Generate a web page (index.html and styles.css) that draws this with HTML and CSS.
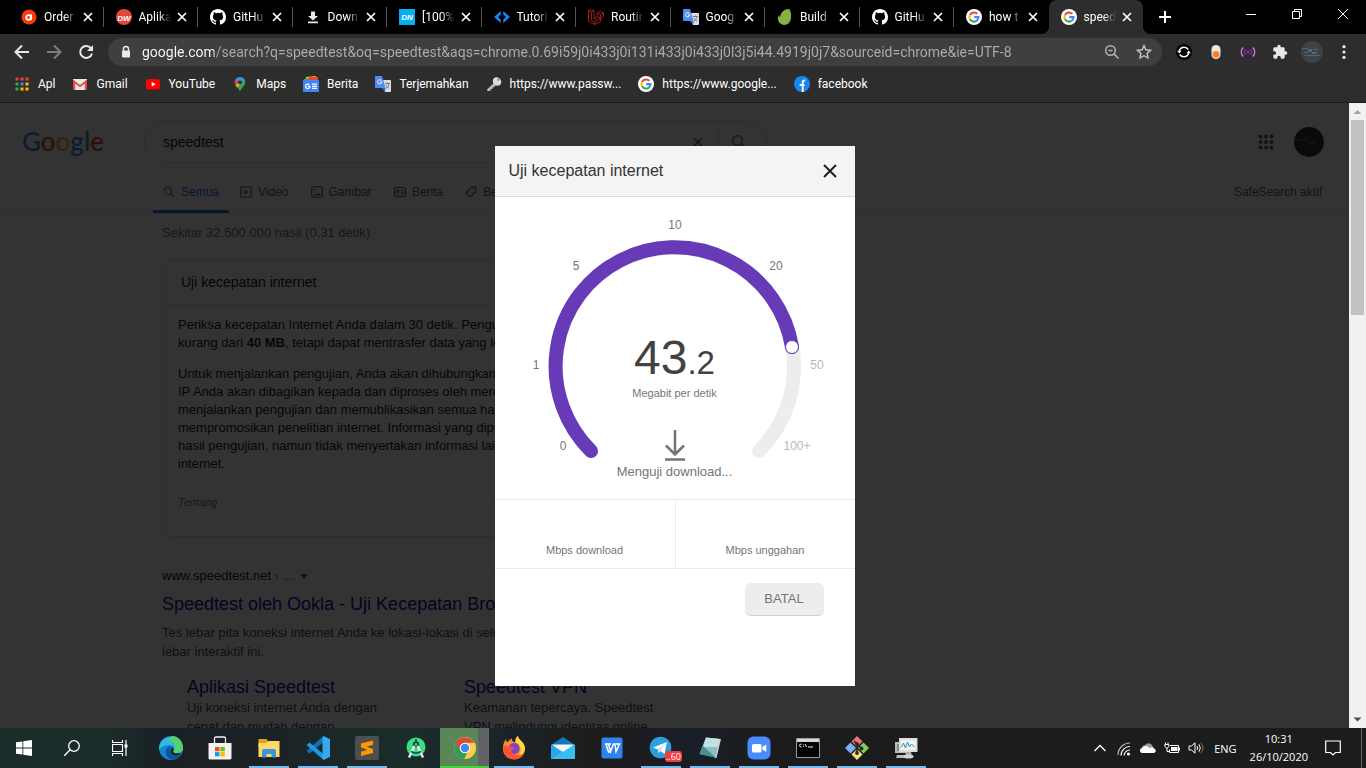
FILE: index.html
```html
<!DOCTYPE html>
<html lang="id">
<head>
<meta charset="utf-8">
<title>speedtest - Penelusuran Google</title>
<link rel="stylesheet" href="styles.css">
</head>
<body>
<svg class="sprite" aria-hidden="true">
  <symbol id="i-x" viewBox="0 0 16 16"><path d="M4 4l8 8M12 4l-8 8" fill="none" stroke="currentColor" stroke-width="1.7"/></symbol>
  <symbol id="i-google" viewBox="0 0 16 16"><circle cx="8" cy="8" r="8" fill="#fff"/><g fill="none" stroke-width="2.1"><path d="M11.3 4.9A4.5 4.5 0 0 0 4 5.9" stroke="#ea4335"/><path d="M4 5.9a4.5 4.5 0 0 0 0 4.2" stroke="#fbbc05"/><path d="M4 10.1a4.5 4.5 0 0 0 7 1.4" stroke="#34a853"/><path d="M11 11.5a4.5 4.5 0 0 0 1.5-3.4H8.2" stroke="#4285f4"/></g></symbol>
  <symbol id="i-github" viewBox="0 0 16 16"><path fill="#fff" d="M8 0C3.58 0 0 3.58 0 8c0 3.54 2.29 6.53 5.47 7.59.4.07.55-.17.55-.38 0-.19-.01-.82-.01-1.49-2.01.37-2.53-.49-2.69-.94-.09-.23-.48-.94-.82-1.13-.28-.15-.68-.52-.01-.53.63-.01 1.08.58 1.23.82.72 1.21 1.87.87 2.33.66.07-.52.28-.87.51-1.07-1.78-.2-3.64-.89-3.64-3.95 0-.87.31-1.59.82-2.15-.08-.2-.36-1.02.08-2.12 0 0 .67-.21 2.2.82a7.4 7.4 0 0 1 4 0c1.53-1.04 2.2-.82 2.2-.82.44 1.1.16 1.92.08 2.12.51.56.82 1.27.82 2.15 0 3.07-1.87 3.75-3.65 3.95.29.25.54.73.54 1.48 0 1.07-.01 1.93-.01 2.2 0 .21.15.46.55.38A8.01 8.01 0 0 0 16 8c0-4.42-3.58-8-8-8z"/></symbol>
  <symbol id="i-translate" viewBox="0 0 16 16"><path d="M7 4h8a1 1 0 0 1 1 1v10a1 1 0 0 1-1 1h-5z" fill="#dadce0"/><path d="M1 0h6l3.5 12H1a1 1 0 0 1-1-1V1a1 1 0 0 1 1-1z" fill="#4f8df5"/><path d="M7 12h3.5L10 16z" fill="#3367d6"/><path d="M6.4 4.6A2.1 2.1 0 1 0 6.8 6H5" fill="none" stroke="#fff" stroke-width="1"/><path d="M10 7.5h5M12.5 6.5v1M14 8c-.5 2-1.7 3.300-3 4.200M11 9c.8 1.500 2 2.500 3.200 3.200" fill="none" stroke="#5f7080" stroke-width=".9"/></symbol>
  <symbol id="i-search" viewBox="0 0 16 16"><circle cx="6.500" cy="6.500" r="4.700" fill="none" stroke="currentColor" stroke-width="1.600"/><path d="M10 10l5 5" stroke="currentColor" stroke-width="1.800"/></symbol>
</svg>

<header class="browser">
  <div class="tabstrip">
    <nav class="tabs" aria-label="Tab">
      <div class="tab"><svg class="fav" viewBox="0 0 16 16"><circle cx="8" cy="8" r="7.500" fill="#fb3a0c"/><circle cx="7.500" cy="8.500" r="2.300" fill="none" stroke="#fff" stroke-width="1.700"/><path d="M10.200 5.500v5.700" stroke="#fff" stroke-width="1.700"/></svg><span class="tab-title">Order</span><button class="tab-x" aria-label="Tutup"><svg><use href="#i-x"/></svg></button></div>
      <div class="tab"><svg class="fav" viewBox="0 0 16 16"><circle cx="8" cy="8" r="8" fill="#e1463d"/><text x="8" y="11.500" class="mark">DW</text></svg><span class="tab-title">Aplika</span><button class="tab-x" aria-label="Tutup"><svg><use href="#i-x"/></svg></button></div>
      <div class="tab"><svg class="fav"><use href="#i-github"/></svg><span class="tab-title">GitHu</span><button class="tab-x" aria-label="Tutup"><svg><use href="#i-x"/></svg></button></div>
      <div class="tab"><svg class="fav" viewBox="0 0 16 16"><path d="M6 2.500h4V7h3l-5 4.500L3 7h3zM3 12.500h10v1.700H3z" fill="#e8e8e8"/></svg><span class="tab-title">Down</span><button class="tab-x" aria-label="Tutup"><svg><use href="#i-x"/></svg></button></div>
      <div class="tab"><svg class="fav" viewBox="0 0 16 16"><path d="M0 0h16v16H0z" fill="#05aeef"/><text x="8" y="11" class="mark">DN</text></svg><span class="tab-title">[100%</span><button class="tab-x" aria-label="Tutup"><svg><use href="#i-x"/></svg></button></div>
      <div class="tab"><svg class="fav" viewBox="0 0 16 16"><path d="M6.700 2L0 8l6.700 6v-3.600L4.200 8l2.500-2.400zM9.300 2L16 8l-6.700 6v-3.600L11.800 8 9.300 5.600z" fill="#1583f5"/></svg><span class="tab-title">Tutori</span><button class="tab-x" aria-label="Tutup"><svg><use href="#i-x"/></svg></button></div>
      <div class="tab"><svg class="fav" viewBox="0 0 16 16"><path d="M.5 1.500l3-1 2.500 1v8l3.200-1.800V4l3-1.800L15.500 4v3.600l-3 1.800v3L6.500 15.500l-6-3.400zM.5 1.500l3 1.500v8.500l3 1.800 6-3.800M3.500 3L6 1.500M9.200 4l3.100 1.700L15.500 4M12.300 5.700v3.600M6 9.500l3.200 1.700M9.200 7.700l3.200 1.700M6.500 13v2.500" fill="none" stroke="#b3211b" stroke-width=".9"/></svg><span class="tab-title">Routin</span><button class="tab-x" aria-label="Tutup"><svg><use href="#i-x"/></svg></button></div>
      <div class="tab"><svg class="fav"><use href="#i-translate"/></svg><span class="tab-title">Goog</span><button class="tab-x" aria-label="Tutup"><svg><use href="#i-x"/></svg></button></div>
      <div class="tab"><svg class="fav" viewBox="0 0 16 16"><path d="M12.300.2c-.7-.5-4 0-6.500 2.200C3 5 3.200 8.300 3.200 8.300s-1-.6-1.100-2.300c-1.500 2-1.800 4.800.2 7.500 2.200 3 6.800 3.100 9.200 1 4-3.600 2.700-13 .8-14.300z" fill="#81b441"/></svg><span class="tab-title">Build</span><button class="tab-x" aria-label="Tutup"><svg><use href="#i-x"/></svg></button></div>
      <div class="tab"><svg class="fav"><use href="#i-github"/></svg><span class="tab-title">GitHu</span><button class="tab-x" aria-label="Tutup"><svg><use href="#i-x"/></svg></button></div>
      <div class="tab tab-last"><svg class="fav"><use href="#i-google"/></svg><span class="tab-title">how t</span><button class="tab-x" aria-label="Tutup"><svg><use href="#i-x"/></svg></button></div>
      <div class="tab tab-active"><svg class="fav"><use href="#i-google"/></svg><span class="tab-title">speed</span><button class="tab-x" aria-label="Tutup"><svg><use href="#i-x"/></svg></button></div>
    </nav>
    <button class="new-tab" aria-label="Tab baru"><svg viewBox="0 0 16 16"><path d="M8 2v12M2 8h12" stroke="#fff" stroke-width="2"/></svg></button>
    <div class="win-controls">
      <button aria-label="Minimalkan"><svg viewBox="0 0 12 12"><path d="M1 6.500h10" stroke="#fff"/></svg></button>
      <button aria-label="Pulihkan"><svg viewBox="0 0 12 12"><path d="M1.500 3.500h7v7h-7zM3.500 3.500v-2h7v7h-2" fill="none" stroke="#fff"/></svg></button>
      <button aria-label="Tutup"><svg viewBox="0 0 12 12"><path d="M1 1l10 10M11 1L1 11" stroke="#fff"/></svg></button>
    </div>
  </div>

  <div class="toolbar">
    <button class="tool" aria-label="Kembali"><svg viewBox="0 0 16 16"><path d="M15 8H2M8 1.500L1.500 8 8 14.500" fill="none" stroke="#e8e8e8" stroke-width="2"/></svg></button>
    <button class="tool" aria-label="Maju"><svg viewBox="0 0 16 16"><path d="M1 8h13M8 1.500L14.500 8 8 14.500" fill="none" stroke="#7d7d7d" stroke-width="2"/></svg></button>
    <button class="tool" aria-label="Muat ulang"><svg viewBox="0 0 16 16"><path d="M13 4.300A6 6 0 1 0 14 9.500" fill="none" stroke="#e8e8e8" stroke-width="2"/><path d="M15 1v6H9z" fill="#e8e8e8"/></svg></button>
    <div class="omnibox">
      <svg class="lock" viewBox="0 0 10 14"><path d="M2.500 6V4a2.500 2.500 0 0 1 5 0v2" fill="none" stroke="#e8e8e8" stroke-width="1.500"/><rect x="1" y="5.500" width="8" height="7" rx="1" fill="#e8e8e8"/></svg>
      <input class="url" type="text" aria-label="Alamat" value="google.com/search?q=speedtest&amp;oq=speedtest&amp;aqs=chrome.0.69i59j0i433j0i131i433j0i433j0l3j5i44.4919j0j7&amp;sourceid=chrome&amp;ie=UTF-8">
      <button class="tool" aria-label="Zoom"><svg viewBox="0 0 16 16"><circle cx="6.500" cy="6.500" r="4.800" fill="none" stroke="#b4b4b4" stroke-width="1.500"/><path d="M10 10l4.500 4.500M4.500 6.500h4" stroke="#b4b4b4" stroke-width="1.600"/></svg></button>
      <button class="tool" aria-label="Bookmark"><svg viewBox="0 0 16 16"><path d="M8 1.600l1.900 4.200 4.600.5-3.400 3.100.9 4.600L8 11.700 4 14l.9-4.600L1.500 6.300l4.600-.5z" fill="none" stroke="#c4c4c4" stroke-width="1.400"/></svg></button>
    </div>
    <button class="tool" aria-label="Sinkronisasi"><svg viewBox="0 0 16 16"><circle cx="8" cy="8" r="8" fill="#000"/><path d="M3.300 6.800a5 5 0 0 1 9-1.300M12.700 9.200a5 5 0 0 1-9 1.300" fill="none" stroke="#fff" stroke-width="1.400"/><path d="M1 6.800h4.600L3.300 9.600zM10.400 9.200H15l-2.300-2.800z" fill="#fff"/></svg></button>
    <button class="tool" aria-label="Ekstensi tombol"><svg viewBox="0 0 16 16"><rect x="3.500" y="1" width="9" height="14" rx="4.500" fill="#e9e9e9"/><circle cx="8" cy="10.300" r="3.400" fill="#f5812a"/></svg></button>
    <button class="tool" aria-label="Ekstensi sinyal"><svg viewBox="0 0 16 16"><circle cx="8" cy="8" r="1.300" fill="#b01fd0"/><path d="M5.600 5.300a4 4 0 0 0 0 5.400M10.400 5.300a4 4 0 0 1 0 5.400" fill="none" stroke="#a516c8" stroke-width="1.200"/><path d="M3 3.500a7 7 0 0 0 0 9M13 3.500a7 7 0 0 1 0 9" fill="none" stroke="#cb8ade" stroke-width="1.400"/></svg></button>
    <button class="tool" aria-label="Ekstensi"><svg viewBox="0 0 24 24"><path d="M20.500 11H19V7a2 2 0 0 0-2-2h-4V3.500a2.500 2.500 0 0 0-5 0V5H4a2 2 0 0 0-2 2v3.800h1.500a2.700 2.700 0 0 1 0 5.400H2V20a2 2 0 0 0 2 2h3.800v-1.500a2.700 2.700 0 0 1 5.400 0V22H17a2 2 0 0 0 2-2v-4h1.500a2.500 2.500 0 0 0 0-5z" fill="#e8e8e8"/></svg></button>
    <button class="tool tool-avatar" aria-label="Profil"><svg viewBox="0 0 22 22"><circle cx="11" cy="11" r="11" fill="#3d4247"/><path d="M1 7h6v1H1zM3 11h4v1H3zM3 14h16v1H3zM12 8h5v1h-5z" fill="#59626b"/><path d="M7 8h4v3H7zM11 11h5v2h-5z" fill="#4f6780"/></svg></button>
    <button class="tool" aria-label="Menu"><svg viewBox="0 0 16 16" fill="#e8e8e8"><circle cx="8" cy="2.700" r="1.600"/><circle cx="8" cy="8" r="1.600"/><circle cx="8" cy="13.300" r="1.600"/></svg></button>
  </div>

  <nav class="bookmarks" aria-label="Bookmark">
    <a href="#apps"><svg viewBox="0 0 16 16"><path d="M1.500 1.500h3v3h-3zM6.500 1.500h3v3h-3zM11.500 1.500h3v3h-3z" fill="#ea4335"/><path d="M1.500 6.500h3v3h-3zM1.500 11.500h3v3h-3z" fill="#34a853"/><path d="M6.500 6.500h3v3h-3z" fill="#4285f4"/><path d="M11.500 6.500h3v3h-3zM6.500 11.500h3v3h-3zM11.500 11.500h3v3h-3z" fill="#fbbc05"/></svg>Apl</a>
    <a href="#gmail"><svg viewBox="0 0 16 16"><path d="M1 3h14v11H1z" fill="#e8e8e8"/><path d="M1 14V3.500L8 9l7-5.500V14h-2.200V7.500L8 11.300 3.200 7.500V14z" fill="#e04a3f"/></svg>Gmail</a>
    <a href="#youtube"><svg viewBox="0 0 16 16"><rect x="1" y="3" width="14" height="10.500" rx="2.500" fill="#f00"/><path d="M6.700 5.900l4 2.300-4 2.300z" fill="#fff"/></svg>YouTube</a>
    <a href="#maps"><svg viewBox="0 0 16 16"><path d="M8 1a5.300 5.300 0 0 0-5.300 5.300C2.700 10 7 12 8 15.500 9 12 13.300 10 13.300 6.300A5.300 5.300 0 0 0 8 1z" fill="#34a853"/><path d="M8 1a5.300 5.300 0 0 1 4.700 2.800L8 7 3.500 4C4.300 2.200 6 1 8 1z" fill="#4285f4"/><path d="M3.700 3.300L7 6.500 4 10.200C2.200 7.500 2.200 5.500 3.700 3.300z" fill="#ea4335"/><path d="M9.500 6L5 11.500 3.800 10 8 5z" fill="#fbbc05"/><circle cx="8" cy="6.300" r="1.900" fill="#2e2e2e"/></svg>Maps</a>
    <a href="#berita"><svg viewBox="0 0 16 16"><path d="M3 1l10-1v5H3z" fill="#fbbc05"/><path d="M1 3l10-2 1 4H1z" fill="#34a853"/><path d="M6 1h9v4H6z" fill="#ea4335"/><rect y="4" width="16" height="12" rx="1" fill="#4285f4"/><path d="M6.300 8.700a2.200 2.200 0 1 0 .7 1.700H5M9 8.200h5M9 10.300h5M9 12.400h5" fill="none" stroke="#fff" stroke-width="1.200"/></svg>Berita</a>
    <a href="#terjemahkan"><svg><use href="#i-translate"/></svg>Terjemahkan</a>
    <a href="#passwords"><svg viewBox="0 0 16 16"><path d="M1 13.500L8 7l2 2-2 2.300-1.500.2-.2 1.700-1.800.1-.2 1.700H1.500z" fill="#bdbdbd"/><ellipse cx="11" cy="5.500" rx="4.500" ry="4" transform="rotate(45 11 5.500)" fill="#dcdcdc"/><circle cx="12.300" cy="3.800" r="1" fill="#777"/></svg>https://www.passw...</a>
    <a href="#google"><svg><use href="#i-google"/></svg>https://www.google...</a>
    <a href="#facebook"><svg viewBox="0 0 16 16"><circle cx="8" cy="8" r="8" fill="#1488f0"/><path d="M8.700 16V6.200q0-2 2.400-1.700M5.600 9h5" fill="none" stroke="#fff" stroke-width="2"/></svg>facebook</a>
  </nav>
</header>

<div class="viewport">
  <div class="page">
    <main class="content">
      <div class="page-head">
        <div class="search-row">
          <a class="logo" href="#home" aria-label="Google"><span class="c-blue">G</span><span class="c-red">o</span><span class="c-yellow">o</span><span class="c-blue">g</span><span class="c-green">l</span><span class="c-red">e</span></a>
          <form class="searchbox">
            <input type="text" aria-label="Telusuri" value="speedtest">
            <button type="button" class="clear" aria-label="Hapus"><svg><use href="#i-x"/></svg></button>
            <button type="button" class="go" aria-label="Cari"><svg><use href="#i-search"/></svg></button>
          </form>
          <div class="account">
            <button aria-label="Aplikasi Google"><svg class="grid-icon" viewBox="0 0 16 16" fill="#5f6368"><circle cx="2.500" cy="2.500" r="1.900"/><circle cx="8" cy="2.500" r="1.900"/><circle cx="13.500" cy="2.500" r="1.900"/><circle cx="2.500" cy="8" r="1.900"/><circle cx="8" cy="8" r="1.900"/><circle cx="13.500" cy="8" r="1.900"/><circle cx="2.500" cy="13.500" r="1.900"/><circle cx="8" cy="13.500" r="1.900"/><circle cx="13.500" cy="13.500" r="1.900"/></svg></button>
            <button aria-label="Akun"><svg class="avatar" viewBox="0 0 30 30"><circle cx="15" cy="15" r="15" fill="#2e3236"/><path d="M1 12h8v2H1zM9 10h5v4H9zM14 14h7v4h-7zM12 21h16v1H12z" fill="#40506b"/></svg></button>
          </div>
        </div>
        <nav class="filters">
          <a class="filter filter-on" href="#semua"><svg viewBox="0 0 16 16" fill="none" stroke-width="1.700"><path d="M1.500 6.500a5 5 0 0 1 5-5" stroke="#ea4335"/><path d="M6.500 1.500a5 5 0 0 1 5 5" stroke="#34a853"/><path d="M1.500 6.500a5 5 0 0 0 5 5" stroke="#fbbc05"/><path d="M11.500 6.500a5 5 0 0 1-5 5M10 10l5 5" stroke="#4285f4"/></svg>Semua</a>
          <a class="filter" href="#video"><svg viewBox="0 0 16 16"><rect x="1" y="1" width="14" height="14" rx="2" fill="none" stroke="currentColor" stroke-width="1.600"/><path d="M6.200 4.500v7l5-3.500z" fill="currentColor"/></svg>Video</a>
          <a class="filter" href="#gambar"><svg viewBox="0 0 16 16"><rect x="1" y="1" width="14" height="14" rx="2" fill="none" stroke="currentColor" stroke-width="1.600"/><path d="M3.500 12.500l2.500-3 2 1.800 2.500-2.300 2.500 3.500z" fill="currentColor"/><circle cx="5" cy="5" r="1.300" fill="currentColor"/></svg>Gambar</a>
          <a class="filter" href="#berita-filter"><svg viewBox="0 0 16 16"><rect x=".8" y="2" width="14.400" height="12" rx="1.500" fill="none" stroke="currentColor" stroke-width="1.600"/><path d="M3.500 5h3.500v4H3.500zM3.500 10.500H7v1H3.500zM9 5h4v1.200H9zM9 7.700h4v1.200H9zM9 10.400h4v1.200H9z" fill="currentColor"/></svg>Berita</a>
          <a class="filter" href="#belanja"><svg viewBox="0 0 16 16"><path d="M9 1.500h5.500V7L7 14.500 1.500 9z" fill="none" stroke="currentColor" stroke-width="1.600" stroke-linejoin="round"/><circle cx="11.500" cy="4.500" r="1.100" fill="currentColor"/></svg>Belanja</a>
          <span class="safesearch">SafeSearch aktif</span>
        </nav>
      </div>

      <div class="results">
        <p class="stats">Sekitar 32.500.000 hasil (0,31 detik)</p>
        <section class="card">
          <h2>Uji kecepatan internet</h2>
          <div class="card-body">
            <p>Periksa kecepatan Internet Anda dalam 30 detik. Pengujian biasanya<br>kurang dari <b>40 MB</b>, tetapi dapat mentrasfer data yang lebih banyak.</p>
            <p>Untuk menjalankan pengujian, Anda akan dihubungkan ke M-Lab dan<br>IP Anda akan dibagikan kepada dan diproses oleh mereka. M-Lab akan<br>menjalankan pengujian dan memublikasikan semua hasil untuk<br>mempromosikan penelitian internet. Informasi yang dipublikasikan<br>hasil pengujian, namun tidak menyertakan informasi lain tentang Anda<br>internet.</p>
            <p class="about">Tentang</p>
          </div>
        </section>
        <article class="result">
          <p class="cite">www.speedtest.net<span class="crumb"> › ...</span><span class="caret"></span></p>
          <h3><a href="#ookla">Speedtest oleh Ookla - Uji Kecepatan Broadband</a></h3>
          <p class="desc">Tes lebar pita koneksi internet Anda ke lokasi-lokasi di seluruh dunia dengan uji<br>lebar interaktif ini.</p>
          <div class="sitelinks">
            <div><h3><a href="#aplikasi">Aplikasi Speedtest</a></h3><p class="desc">Uji koneksi internet Anda dengan<br>cepat dan mudah dengan</p></div>
            <div><h3><a href="#vpn">Speedtest VPN</a></h3><p class="desc">Keamanan tepercaya. Speedtest<br>VPN melindungi identitas online</p></div>
          </div>
        </article>
      </div>
    </main>

    <div class="scrim">
      <section class="dialog" role="dialog" aria-labelledby="dlg-title">
        <header class="dialog-head">
          <h1 id="dlg-title">Uji kecepatan internet</h1>
          <button aria-label="Tutup"><svg viewBox="0 0 14 14"><path d="M1 1l12 12M13 1L1 13" stroke="#212121" stroke-width="2"/></svg></button>
        </header>
        <div class="gauge">
          <svg viewBox="0 0 360 302">
            <g fill="none" stroke-width="14" stroke-linecap="round">
              <path d="M96 254A119 119 0 1 1 264 254" stroke="#ededed"/>
              <path d="M96 254A119 119 0 1 1 297 150" stroke="#673ab7"/>
            </g>
            <circle cx="297" cy="150" r="6.500" fill="#fff" stroke="#673ab7"/>
            <g class="ticks">
              <text x="68" y="253">0</text><text x="41" y="172">1</text><text x="81" y="73">5</text><text x="180" y="32">10</text><text x="281" y="73">20</text>
              <text x="322" y="172" class="tick-off">50</text><text x="302" y="253" class="tick-off">100+</text>
            </g>
            <path d="M180 233v24M171 248.500l9 9 9-9M170 262.500h20" fill="none" stroke="#757575" stroke-width="2.500"/>
          </svg>
          <div class="reading">
            <p class="speed">43<span>.2</span></p>
            <p class="unit">Megabit per detik</p>
            <p class="status">Menguji download...</p>
          </div>
        </div>
        <div class="totals"><p>Mbps download</p><p>Mbps unggahan</p></div>
        <footer class="dialog-foot"><button>BATAL</button></footer>
      </section>
    </div>
  </div>

  <div class="scrollbar" aria-hidden="true">
    <svg viewBox="0 0 17 17"><path d="M4.500 11h8l-4-4z" fill="#a3a3a3"/></svg>
    <div class="track"><div class="thumb"></div></div>
    <svg viewBox="0 0 17 17"><path d="M4.500 6.500h8l-4 4z" fill="#505050"/></svg>
  </div>
</div>

<footer class="taskbar">
  <button class="sys" aria-label="Mulai"><svg viewBox="0 0 16 16"><path d="M0 2.300l6.500-.9v6.200H0zM7.300 1.300L16 0v7.600H7.300zM0 8.400h6.500v6.200L0 13.700zM7.300 8.400H16V16l-8.700-1.300z" fill="#fff"/></svg></button>
  <button class="sys" aria-label="Cari"><svg viewBox="0 0 16 16"><circle cx="10" cy="6" r="5.300" fill="none" stroke="#fff" stroke-width="1.300"/><path d="M6.200 9.800L0 16" stroke="#fff" stroke-width="1.300"/></svg></button>
  <button class="sys" aria-label="Tampilan tugas"><svg viewBox="0 0 16 16"><path d="M.5 0v2.500h10V0M.5 16v-2.500h10V16M.5 4.500h10v7H.5zM14 0v16" fill="none" stroke="#fff" stroke-width="1.200"/><path d="M12.500 4.500h3v3h-3z" fill="#fff"/></svg></button>
  <div class="apps">
    <button aria-label="Edge"><svg viewBox="0 0 24 24"><circle cx="12" cy="12" r="12" fill="#1583d0"/><path d="M1.500 7A12 12 0 0 1 24 11.500c0 4-3 6-6 6-4 0-4-2-3-3.500 1-2-.5-5-4-5-5 0-9 2-10.800 5C-.2 11 .5 9 1.500 7z" fill="#35b8dc"/><path d="M13 0c7 0 11 6 11 11.500 0 4-3 6-6 6-4 0-4-2-3-3.500 3-6-2-10-7-9z" fill="#55cf70"/><path d="M8 12c-3 4-.5 10 5 11.800 4-.2 7-2 9-5-5 2.500-10 1-11-4-.2-1.500.2-3 1-4-2-.3-3 .2-4 1.200z" fill="#0c559e"/><path d="M14.500 14.500c-1.500 2.500 2 3.800 7 2l-1 2.500c-4 1.500-8.500.5-9-4 0-2 1-3 2-3.700 1 .7 1.500 2 1 3.200z" fill="#172227"/></svg></button>
    <button aria-label="Store"><svg viewBox="0 0 24 24"><path d="M6.500 7V2.500q0-1.500 1.500-1.500h8q1.500 0 1.500 1.500V7" fill="none" stroke="#f2f2f2" stroke-width="1.300"/><path d="M.5 7h23v15q0 1.500-1.500 1.500H2Q.5 23.500.5 22z" fill="#f2f2f2"/><path d="M7 11h4.500v4.300H7z" fill="#f25022"/><path d="M12.300 11h4.500v4.300h-4.500z" fill="#7fba00"/><path d="M7 16.100h4.500v4.300H7z" fill="#00a4ef"/><path d="M12.300 16.100h4.500v4.300h-4.500z" fill="#ffb900"/></svg></button>
    <button class="open" aria-label="File Explorer"><svg viewBox="0 0 24 24"><path d="M1.500 3h8l2 2.500H22v6H1.500z" fill="#e2a21b"/><path d="M1.500 7H9l3-2h10.500v16h-21z" fill="#ffd867"/><path d="M5 21.500V15q0-2 2-2h10q2 0 2 2v6.500h-4.500V18h-5v3.500z" fill="#3c94d9"/></svg></button>
    <button class="open" aria-label="VS Code"><svg viewBox="0 0 24 24"><path d="M17.500 0v6L3.500 17.500.5 15z" fill="#0f72b8"/><path d="M17.500 24v-6L3.500 6.500.5 9z" fill="#2196e3"/><path d="M17.500 0L24 3v18l-6.500 3-1-1.500v-21z" fill="#34a9ed"/></svg></button>
    <button class="open" aria-label="Sublime Text"><svg viewBox="0 0 24 24"><rect width="24" height="24" rx="2" fill="#4e4e4e"/><path d="M18 4.500v4.300l-6.500 2 6.500 2.100v4.200L6 20v-4.300l6.500-2L6 11.600V7.400z" fill="#ff9800"/></svg></button>
    <button aria-label="Android Studio"><svg viewBox="0 0 24 24"><circle cx="12" cy="11" r="9.500" fill="#3ddc84"/><circle cx="12" cy="8.500" r="2.300" fill="none" stroke="#174f45" stroke-width="2"/><path d="M10.500 10L5 21.500M13.500 10L19 21.500" stroke="#e6eff2" stroke-width="2.400"/><path d="M7 15.500q5 3 10 0M12 3v3" fill="none" stroke="#174f45" stroke-width="1.700"/></svg></button>
    <button class="active" aria-label="Chrome"><svg viewBox="0 0 24 24"><circle cx="12" cy="12" r="11" fill="#ffce44"/><path d="M12 12L2.500 6.500A11 11 0 0 0 11 23l4.800-8.500z" fill="#2f9e58"/><path d="M2.500 6.500A11 11 0 0 1 21.500 6.800H12v5.200l-4.700 2.600z" fill="#db4a3c"/><circle cx="12" cy="12" r="5.300" fill="#fff"/><circle cx="12" cy="12" r="4.200" fill="#4285f4"/></svg></button>
    <button class="open" aria-label="Firefox"><svg viewBox="0 0 24 24"><path d="M16 0c0 4 7 5.500 7 13A11 10.500 0 0 1 1 13C1 8 2 6 4 3c0 2 .5 3 2 3 1-2 2-3 4-3.500C9 5 12 6 13 6c0-3 1-5 3-6z" fill="#ff8a22"/><path d="M16 0c0 4 7 5.500 7 13-1 4-3 6-6 6 3-4 2-10-3-13 0-3 0-4 2-6z" fill="#ffda3a"/><circle cx="12" cy="12.500" r="5.500" fill="#7a43d1"/><path d="M1 13c1 7 7 11 13 10 4-.5 7-3 8-6-3 3-7 3-10 1-4-2-3-5 1-5-2-3-5-3-7-2L3 9z" fill="#ff5038"/></svg></button>
    <button aria-label="Mail"><svg viewBox="0 0 24 24"><path d="M0 9L12 1l12 8v14H0z" fill="#1477bd"/><path d="M1 8.500h22L12 18z" fill="#f3f6f8"/><path d="M0 8.500l12 7.500-12 7z" fill="#2ba7e8"/><path d="M24 8.500V23H0z" fill="#38bdf3"/></svg></button>
    <button aria-label="WPS"><svg viewBox="0 0 24 24"><rect x="1.500" y="1.500" width="21" height="21" rx="2" fill="#2f83ee"/><path d="M5 8h6l-2.500 0L10.500 15.500 13.500 8H15l1 7.500L19.500 8H16M6 8l2.500 8h2.500" fill="none" stroke="#fff" stroke-width="1.500"/></svg></button>
    <button class="open" aria-label="Telegram"><svg viewBox="0 0 24 24"><circle cx="11.500" cy="11.500" r="10.800" fill="#2ba0dc"/><path d="M4 11.500L18 6l-2.500 12-4-3-2 2-.5-3.500z" fill="#fff"/><path d="M9 13.500L15.500 8.500 11 14.500l-1.500 2.500z" fill="#b9d9ec"/></svg><span class="badge">..60</span></button>
    <button class="open" aria-label="Notepad"><svg viewBox="0 0 24 24"><path d="M8 2l15 1-4.500 19H17z" fill="#d8d2c5"/><path d="M8 1.500L21.500 3l-4 18.500L1.500 18z" fill="#85bfc7"/><path d="M8 1.500L21.500 3l-1.700 8L5 11z" fill="#c2e1e5"/><path d="M5 10l-3.500 8 16 3.500z" fill="#4b8b94"/></svg></button>
    <button class="open" aria-label="Zoom"><svg viewBox="0 0 24 24"><rect x=".5" y=".5" width="23" height="23" rx="6" fill="#4a8cff"/><rect x="5" y="8" width="9.500" height="8.500" rx="1.500" fill="#fff"/><path d="M15.300 11l4-2.500v7.500l-4-2.500z" fill="#fff"/></svg></button>
    <button class="open" aria-label="Command Prompt"><svg viewBox="0 0 24 24"><path d="M.5 2.500h23v19H.5z" fill="#050505" stroke="#9a9a9a"/><path d="M1 3h22v3H1z" fill="#d8d8d8"/><path d="M5.500 8.200q-2-.5-2 1.300t2 1.300M7.500 8.500v.8M7.500 10.200v.7M9 8l1.500 3M12 11h5" fill="none" stroke="#eee"/></svg></button>
    <button class="open" aria-label="Git"><svg viewBox="0 0 24 24"><path d="M12 0l5.500 5.500L12 11 6.500 5.500z" fill="#f1707a"/><path d="M5.500 6.500L11 12l-5.500 5.500L0 12z" fill="#7cb0f5"/><path d="M18.500 6.500L24 12l-5.500 5.500L13 12z" fill="#84cf56"/><path d="M12 13l5.500 5.500L12 24l-5.500-5.500z" fill="#f6df83"/><path d="M9 5l3 3v9M12 8l4.500 4.500" stroke="#2d2825" stroke-width="1.700" fill="none"/><g fill="#2d2825"><circle cx="12" cy="8" r="1.900"/><circle cx="12" cy="17" r="1.900"/><circle cx="16.500" cy="12.500" r="1.900"/></g></svg></button>
    <button class="open" aria-label="Monitor"><svg viewBox="0 0 24 24"><path d="M1 6h13v11H1zM3 19h9v3H2z" fill="#b9bbbb"/><path d="M3 8h9v7H3z" fill="#81898c"/><path d="M5 2h18.500v14H5z" fill="#deded9"/><path d="M7 4h14.500v10H7z" fill="#edf5f8"/><path d="M7.500 11l2-4 2 5 2-6 2 5 2-3 3 3" fill="none" stroke="#318cb5"/><path d="M12 16h5l1 4h-7z" fill="#aeb1ae"/><ellipse cx="14.500" cy="20.500" rx="5" ry="2" fill="#d5d5d1"/></svg></button>
  </div>
  <div class="tray">
    <button aria-label="Ikon tersembunyi"><svg viewBox="0 0 16 16"><path d="M2.500 11L8 5.500l5.500 5.500" fill="none" stroke="#fff" stroke-width="1.300"/></svg></button>
    <button aria-label="Jaringan"><svg viewBox="0 0 16 16"><g fill="none" stroke="#bbb" stroke-width="1.200"><path d="M2 15A12 12 0 0 1 14 3"/><path d="M5 15.500A9 9 0 0 1 14 6.500" stroke="#fff"/><path d="M8 15.500a6 6 0 0 1 6-5.500" stroke="#fff"/></g><circle cx="12.500" cy="14" r="1.600" fill="#fff"/></svg></button>
    <button aria-label="OneDrive"><svg viewBox="0 0 16 16"><path d="M2 10a4 3.500 0 0 1 3-5 4.500 4.500 0 0 1 8 2l-3 3z" fill="#999"/><path d="M2.500 13a2.500 2.500 0 0 1 0-5 4 4 0 0 1 7 .3 3.500 3.500 0 0 1 5 .4A2.300 2.300 0 0 1 14 13z" fill="#fff"/></svg></button>
    <button aria-label="Baterai"><svg viewBox="0 0 16 16"><path d="M6 5.500h8.500v7h-9v-3M15.500 7.500v3M.8 4.500h4v2L3.500 8h-1L.8 6.500zM1.500 2.500v2M4 2.500v2M3 8v3.500h2" fill="none" stroke="#fff"/><path d="M7 7h6.500v4H7z" fill="#fff"/></svg></button>
    <button aria-label="Volume"><svg viewBox="0 0 16 16"><path d="M1 6h2.500L7 2.800v10.400L3.500 10H1z" fill="none" stroke="#fff"/><path d="M9 6q1.300 2 0 4M11 4.300q2.600 3.700 0 7.400" fill="none" stroke="#fff"/><path d="M13 2.800q4 5.200 0 10.400" fill="none" stroke="#777"/></svg></button>
    <span class="lang">ENG</span>
    <time class="clock"><span>10:31</span><span>26/10/2020</span></time>
    <button class="notif" aria-label="Pemberitahuan"><svg viewBox="0 0 16 16"><path d="M.7 1h14.600v11.500H10.500L8 15l-2.500-2.500H.7z" fill="none" stroke="#fff" stroke-width="1.200"/></svg></button>
  </div>
</footer>
</body>
</html>
```
FILE: styles.css
```css
* { box-sizing: border-box; }
body {
  margin: 0;
  height: 100vh;
  display: flex;
  flex-direction: column;
  overflow: hidden;
  background: #333;
  font-family: "Liberation Sans", Arial, sans-serif;
}
p, h1, h2, h3 { margin: 0; font-weight: 400; }
a { text-decoration: none; }
button {
  display: flex;
  align-items: center;
  justify-content: center;
  padding: 0;
  border: 0;
  background: none;
  font: inherit;
  color: inherit;
}
svg { display: block; flex: none; }
.sprite { position: absolute; width: 0; height: 0; }

/* Browser chrome */
.browser {
  flex: none;
  background: #2d2d2d;
  border-bottom: 1px solid #1a1a1a;
  color: #fff;
  font-family: Roboto, "Open Sans", sans-serif;
  font-size: 12px;
}
.tabstrip { display: flex; height: 34px; background: #000; }
.tabs { flex: 1; min-width: 0; display: flex; padding-left: 9px; }
.tab {
  position: relative;
  flex: 1 1 0;
  min-width: 0;
  display: flex;
  align-items: center;
  padding: 0 8px 0 12px;
}
.tab::after {
  content: "";
  position: absolute;
  right: 0;
  top: 7px;
  height: 20px;
  border-right: 1px solid #555;
}
.tab-last::after { display: none; }
.fav { width: 16px; height: 16px; }
.tab-title {
  flex: 1;
  min-width: 0;
  margin: 0 3px 0 7px;
  overflow: hidden;
  white-space: nowrap;
  -webkit-mask-image: linear-gradient(90deg, #000 60%, transparent);
  mask-image: linear-gradient(90deg, #000 60%, transparent);
}
.tab-x, .tab-x svg { width: 16px; height: 16px; }
.tab-active { background: #2d2d2d; border-radius: 8px 8px 0 0; }
.tab-active::before, .tab-active::after {
  content: "";
  position: absolute;
  top: auto;
  bottom: 0;
  width: 8px;
  height: 8px;
  border: 0;
}
.tab-active::before { left: -8px; background: radial-gradient(circle at 0 0, #000 8px, #2d2d2d 8px); }
.tab-active::after { right: -8px; background: radial-gradient(circle at 100% 0, #000 8px, #2d2d2d 8px); }
.mark { fill: #fff; font-family: "Liberation Sans", Arial, sans-serif; font-size: 8px; font-style: italic; font-weight: 700; text-anchor: middle; }
.new-tab { width: 44px; }
.new-tab svg { width: 16px; height: 16px; }
.win-controls { display: flex; margin-left: 41px; height: 28px; }
.win-controls button { width: 46px; }
.win-controls svg { width: 12px; height: 12px; }

.toolbar { display: flex; align-items: center; height: 36px; padding: 0 6px; }
.tool { width: 32px; height: 28px; flex: none; }
.tool svg { width: 16px; height: 16px; }
.tool-avatar svg { width: 22px; height: 22px; }
.omnibox {
  flex: 1;
  display: flex;
  align-items: center;
  height: 28px;
  margin: 0 6px;
  padding: 0 2px 0 13px;
  border-radius: 14px;
  background: #3f3f3f;
}
.lock { width: 10px; height: 14px; }
.url {
  flex: 1;
  min-width: 0;
  margin-left: 11px;
  padding: 0;
  border: 0;
  outline: 0;
  font: 14px/20px Roboto, "Open Sans", sans-serif;
  color: transparent;
  background: linear-gradient(90deg, #fff 72px, #adadad 72px);
  -webkit-background-clip: text;
  background-clip: text;
}

.bookmarks { display: flex; gap: 17px; height: 32px; padding: 0 14px 4px; }
.bookmarks a { display: flex; align-items: center; gap: 8px; color: #fff; }
.bookmarks svg { width: 16px; height: 16px; }

/* Search page */
.viewport { flex: 1; min-height: 0; display: flex; }
.page { position: relative; flex: 1; min-width: 0; overflow: hidden; background: #fff; }
.content { position: absolute; inset: 0; overflow: hidden; }
.page-head { padding-top: 18px; border-bottom: 1px solid #e4e4e4; }
.search-row { display: flex; align-items: center; padding: 0 25px 0 22px; }
.logo { width: 122px; padding-bottom: 3px; font: 500 26px/36px Lato, sans-serif; }
.c-blue { color: #4285f4; }
.c-red { color: #ea4335; }
.c-yellow { color: #fbbc05; }
.c-green { color: #34a853; }
.searchbox {
  display: flex;
  align-items: center;
  width: 623px;
  height: 42px;
  padding: 0 7px 0 18px;
  border: 1px solid #dfe1e5;
  border-radius: 21px;
}
.searchbox input { flex: 1; min-width: 0; padding: 0; border: 0; outline: 0; background: none; color: #202124; font: 14px/20px "Liberation Sans", Arial, sans-serif; }
.searchbox svg { width: 16px; height: 16px; }
.clear { width: 42px; height: 28px; border-right: 1px solid #dfe1e5; color: #70757a; }
.go { width: 40px; height: 28px; color: #4285f4; }
.account { display: flex; gap: 20px; margin-left: auto; }
.grid-icon { width: 16px; height: 16px; }
.avatar { width: 30px; height: 30px; }
.filters { display: flex; align-items: stretch; height: 50px; padding: 10px 27px 0 153px; font-size: 12px; color: #5f6368; }
.filter { display: flex; align-items: center; gap: 6px; padding: 0 11px; border-bottom: 3px solid transparent; color: #5f6368; }
.filter svg { width: 12px; height: 12px; }
.filter-on { padding: 0 10px; color: #1a73e8; border-color: #1a73e8; }
.safesearch { margin-left: auto; align-self: center; padding-bottom: 2px; }

.results { padding: 10px 0 0 162px; font-size: 13px; line-height: 18px; width: 750px; color: #222; }
.stats { color: #70757a; }
.card { margin-top: 17px; border: 1px solid #dfe1e5; border-radius: 8px; }
.card h2 { padding: 13px 18px 12px; border-bottom: 1px solid #e4e4e4; font-size: 14px; line-height: 19px; }
.card-body { padding: 11px 15px 26px; white-space: nowrap; overflow: hidden; }
.card-body p + p { margin-top: 13px; }
.card-body p.about { margin-top: 21px; font-size: 11px; line-height: 16px; font-style: italic; color: #70757a; }
.result { margin-top: 30px; white-space: nowrap; }
.cite { display: flex; align-items: center; gap: 3px; font-size: 13px; color: #202124; }
.crumb { color: #5f6368; }
.caret { margin-left: 4px; border: 4px solid transparent; border-top: 5px solid #5f6368; border-bottom: 0; }
.result h3 { margin-top: 7px; font-size: 18px; line-height: 24px; }
.result h3 a { color: #1a0dab; }
.desc { margin-top: 7px; line-height: 19px; color: #4d5156; }
.result .sitelinks h3 { margin: 0; line-height: 22px; }
.sitelinks { display: grid; grid-template-columns: 277px 277px; margin-top: 15px; padding-left: 25px; }
.sitelinks .desc { margin: 0; }

/* Speed test dialog */
.scrim { position: absolute; inset: 0; display: flex; align-items: center; justify-content: center; background: rgba(0, 0, 0, .8); }
.dialog { width: 360px; height: 540px; background: #fff; color: #757575; }
.dialog-head { display: flex; align-items: center; justify-content: space-between; height: 51px; padding: 0 18px 0 14px; background: #f4f4f4; border-bottom: 1px solid #dcdcdc; }
.dialog-head h1 { font-size: 16px; line-height: 20px; color: #333; }
.dialog-head svg { width: 14px; height: 14px; }
.gauge { display: grid; border-bottom: 1px solid #ebebeb; }
.gauge > * { grid-area: 1 / 1; }
.gauge svg { width: 100%; }
.ticks { font-size: 12px; text-anchor: middle; fill: #757575; }
.tick-off { fill: #b8b8b8; }
.reading { display: flex; flex-direction: column; align-items: center; padding-top: 134px; }
.speed { font-size: 48px; line-height: 54px; color: #424242; }
.speed span { font-size: 33px; line-height: 1; }
.unit { font-size: 11px; line-height: 16px; }
.status { margin-top: 62px; font-size: 13px; line-height: 18px; }
.totals { display: grid; grid-template-columns: 1fr 1fr; font-size: 11px; line-height: 16px; text-align: center; border-bottom: 1px solid #ebebeb; }
.totals p { padding: 42px 0 10px; }
.totals p + p { border-left: 1px solid #ebebeb; }
.dialog-foot { display: flex; justify-content: flex-end; padding: 14px 31px; }
.dialog-foot button { width: 79px; height: 32px; border-radius: 6px; background: #ededed; box-shadow: 0 1px 0 #cfcfcf; font-size: 13px; }

.scrollbar { display: flex; flex-direction: column; width: 17px; background: #f1f1f1; }
.scrollbar svg { width: 17px; height: 17px; }
.track { flex: 1; padding: 0 2px; }
.thumb { height: 33%; background: #c1c1c1; }

/* Taskbar */
.taskbar {
  flex: none;
  display: flex;
  height: 40px;
  color: #fff;
  font-family: "Open Sans", "Noto Sans", sans-serif;
  font-size: 11px;
  background: linear-gradient(90deg, #1b2d2b 0, #1b2b2a 110px, #1a2024 170px, #1c2225 270px, #1a2d2b 400px, #1b2428 500px, #1c1c1c 600px, #1a1e27 690px, #1c1c1c 780px);
}
.sys { width: 48px; }
.sys svg { width: 16px; height: 16px; }
.apps { display: flex; margin-left: 2px; }
.apps button { position: relative; width: 49px; }
.apps svg { width: 24px; height: 24px; }
.apps .open::after { content: ""; position: absolute; left: 5px; right: 4px; bottom: 0; height: 2px; background: #76b9ed; }
.apps .active { background: linear-gradient(90deg, #5a8758 38px, #626366 38px); box-shadow: inset 0 -2px #3fd63a; }
.badge { position: absolute; right: 3px; bottom: 6px; padding: 0 1px; border-radius: 3px; background: #f03e3e; font-size: 9px; line-height: 11px; }
.tray { display: flex; align-items: center; margin-left: auto; margin-right: 4px; padding-right: 9px; border-right: 1px solid #666; }
.tray button { width: 24px; height: 40px; }
.tray svg { width: 16px; height: 16px; }
.lang { margin: 0 13px 0 6px; }
.clock { display: flex; flex-direction: column; align-items: center; line-height: 18px; }
.tray .notif { width: 38px; margin-left: 6px; }
```
